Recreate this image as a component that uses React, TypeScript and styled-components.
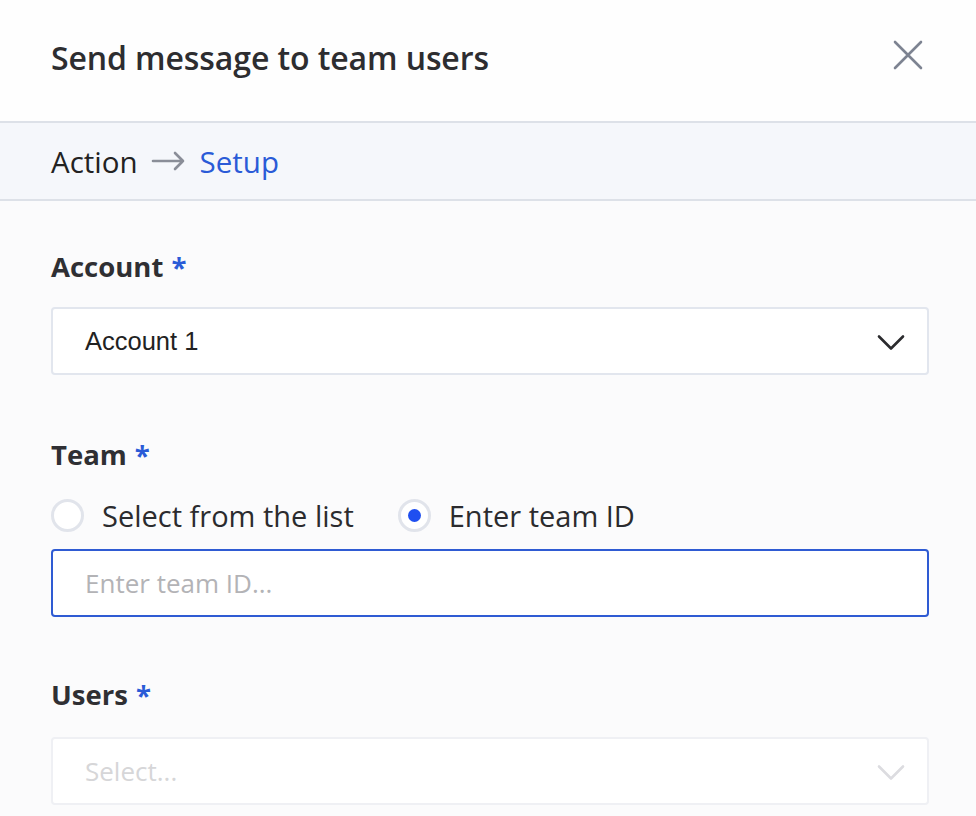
import React, { useState } from "react";
import styled, { createGlobalStyle } from "styled-components";

const GlobalStyle = createGlobalStyle`
  html, body {
    margin: 0;
    padding: 0;
    background: #fbfbfc;
  }
  * {
    box-sizing: border-box;
  }
`;

const Panel = styled.div`
  width: 976px;
  height: 816px;
  overflow: hidden;
  background: #fbfbfc;
  font-family: "Open Sans", "Noto Sans", sans-serif;
  color: #2b2b2e;
`;

const Header = styled.div`
  height: 123px;
  background: #fefefe;
  display: flex;
  align-items: center;
  justify-content: space-between;
  padding: 0 52px 6px 51px;
  border-bottom: 2px solid #dde1e8;
`;

const Title = styled.h1`
  margin: 0;
  font-size: 32px;
  font-weight: 600;
  color: #2d2d30;
  letter-spacing: -0.1px;
`;

const CloseButton = styled.button`
  border: 0;
  background: none;
  padding: 0;
  width: 32px;
  height: 32px;
  margin-top: -6px;
  display: flex;
  align-items: center;
  justify-content: center;
  cursor: pointer;
`;

const Breadcrumb = styled.div`
  height: 78px;
  background: #f5f7fb;
  border-bottom: 2px solid #dde1e8;
  display: flex;
  align-items: center;
  gap: 13px;
  padding: 0 51px;
  font-size: 29.5px;
  color: #222;
`;

const Crumb = styled.span<{ $active?: boolean }>`
  color: ${(p) => (p.$active ? "#2a5bd7" : "#222")};
`;

const Body = styled.div`
  padding: 48px 48px 0 51px;
  display: flex;
  flex-direction: column;
`;

const Field = styled.div<{ $gap: number; $after: number }>`
  display: flex;
  flex-direction: column;
  gap: ${(p) => p.$gap}px;
  margin-bottom: ${(p) => p.$after}px;
`;

const Label = styled.label`
  font-size: 27.5px;
  font-weight: 700;
  color: #2f2f33;
  line-height: 36px;
`;

const Star = styled.span`
  color: #2a5bd7;
  margin-left: 8px;
`;

const SelectBox = styled.div<{ $disabled?: boolean }>`
  height: 68px;
  width: 878px;
  border: 2px solid ${(p) => (p.$disabled ? "#eff0f4" : "#e2e6ee")};
  border-radius: 4px;
  background: #fff;
  display: flex;
  align-items: center;
  justify-content: space-between;
  padding: 0 20px 0 32px;
`;

const SelectValue = styled.span`
  font-family: "Liberation Sans", Arial, sans-serif;
  font-size: 25.5px;
  color: #222;
`;

const Placeholder = styled.span<{ $faint?: boolean }>`
  font-size: 26px;
  color: ${(p) => (p.$faint ? "#d6d6d8" : "#b3b3b6")};
`;

const RadioRow = styled.div`
  display: flex;
  align-items: center;
  gap: 44px;
  height: 36px;
  margin: 10px 0 2px;
`;

const RadioOption = styled.label`
  display: flex;
  align-items: center;
  gap: 18px;
  font-size: 29px;
  color: #2b2b2e;
  cursor: pointer;
`;

const RadioCircle = styled.span<{ $checked?: boolean }>`
  width: 33px;
  height: 33px;
  border-radius: 50%;
  border: 3px solid #e1e4eb;
  background: #fff;
  display: flex;
  align-items: center;
  justify-content: center;

  &::after {
    content: "";
    width: 13px;
    height: 13px;
    border-radius: 50%;
    background: ${(p) => (p.$checked ? "#1f4ff0" : "transparent")};
  }
`;

const TextInput = styled.input`
  height: 68px;
  width: 878px;
  border: 2px solid #2f5bd3;
  border-radius: 4px;
  background: #fff;
  padding: 0 32px;
  font-family: "Open Sans", "Noto Sans", sans-serif;
  font-size: 26px;
  color: #222;
  outline: none;

  &::placeholder {
    color: #b3b3b6;
  }
`;

const Chevron = ({ color }: { color: string }) => (
  <svg width="32" height="20" viewBox="0 0 32 20" fill="none">
    <path
      d="M4 5.5 L16 17.5 L28 5.5"
      stroke={color}
      strokeWidth="2.6"
      strokeLinecap="round"
      strokeLinejoin="round"
    />
  </svg>
);

export default function App() {
  const [mode, setMode] = useState<"list" | "id">("id");

  return (
    <Panel>
      <GlobalStyle />
      <Header>
        <Title>Send message to team users</Title>
        <CloseButton aria-label="Close">
          <svg width="32" height="32" viewBox="0 0 32 32">
            <path
              d="M3 3 L29 29 M29 3 L3 29"
              stroke="#7d8391"
              strokeWidth="2.6"
              strokeLinecap="round"
            />
          </svg>
        </CloseButton>
      </Header>

      <Breadcrumb>
        <Crumb>Action</Crumb>
        <svg width="36" height="20" viewBox="0 0 36 20">
          <path
            d="M2 10 H32 M24 2 L32 10 L24 18"
            stroke="#8a8e98"
            strokeWidth="2.6"
            fill="none"
            strokeLinecap="round"
            strokeLinejoin="round"
          />
        </svg>
        <Crumb $active>Setup</Crumb>
      </Breadcrumb>

      <Body>
        <Field $gap={22} $after={62}>
          <Label>
            Account<Star>*</Star>
          </Label>
          <SelectBox>
            <SelectValue>Account 1</SelectValue>
            <Chevron color="#2b2b2e" />
          </SelectBox>
        </Field>

        <Field $gap={14} $after={60}>
          <Label>
            Team<Star>*</Star>
          </Label>
          <RadioRow>
            <RadioOption onClick={() => setMode("list")}>
              <RadioCircle $checked={mode === "list"} />
              Select from the list
            </RadioOption>
            <RadioOption onClick={() => setMode("id")}>
              <RadioCircle $checked={mode === "id"} />
              Enter team ID
            </RadioOption>
          </RadioRow>
          <TextInput placeholder="Enter team ID..." />
        </Field>

        <Field $gap={24} $after={0}>
          <Label>
            Users<Star>*</Star>
          </Label>
          <SelectBox $disabled>
            <Placeholder $faint>Select...</Placeholder>
            <Chevron color="#dcdce0" />
          </SelectBox>
        </Field>
      </Body>
    </Panel>
  );
}
